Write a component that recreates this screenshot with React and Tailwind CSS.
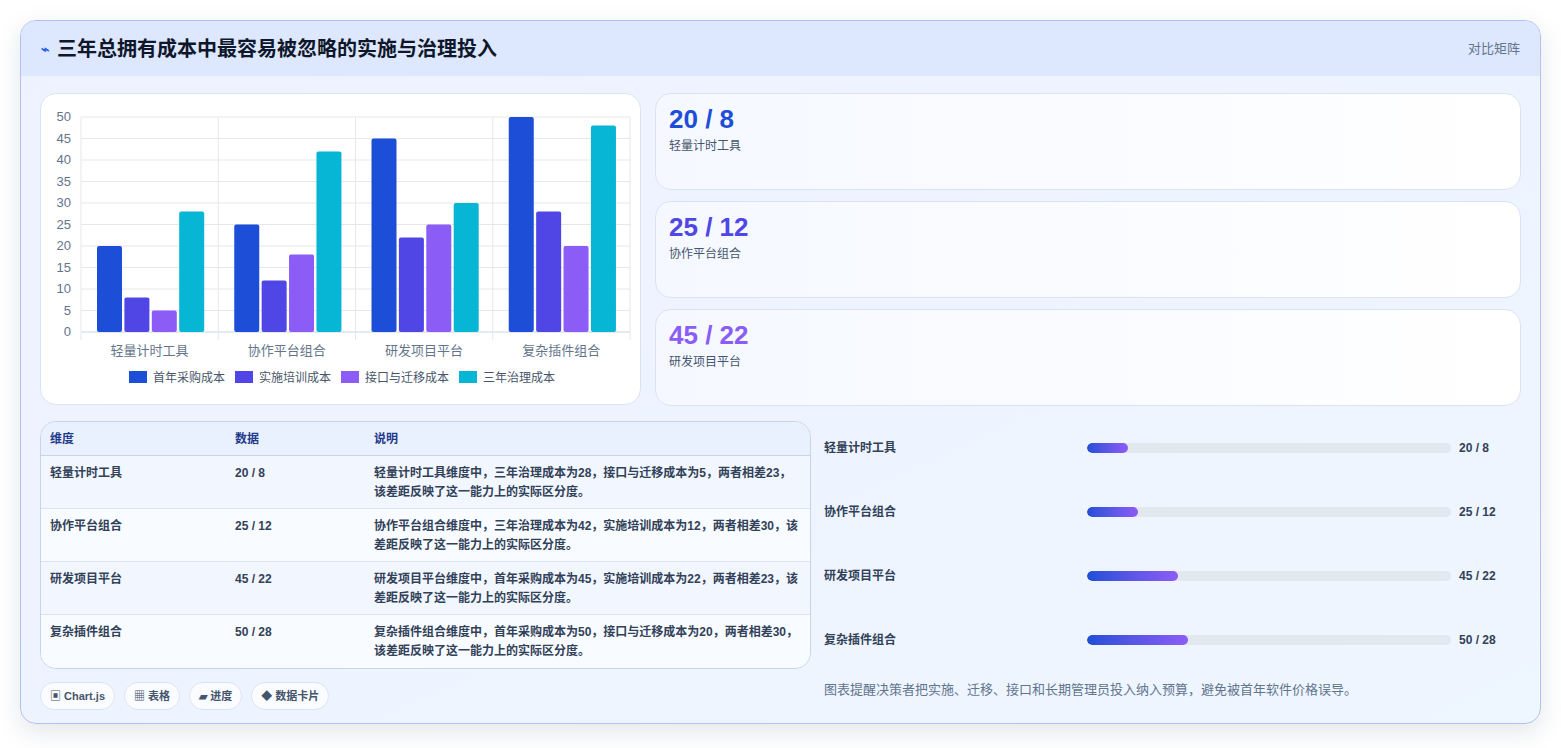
const cats = ["轻量计时工具", "协作平台组合", "研发项目平台", "复杂插件组合"]
const series = [
  { name: "首年采购成本", color: "#1d4ed8", data: [20, 25, 45, 50] },
  { name: "实施培训成本", color: "#4f46e5", data: [8, 12, 22, 28] },
  { name: "接口与迁移成本", color: "#8b5cf6", data: [5, 18, 25, 20] },
  { name: "三年治理成本", color: "#06b6d4", data: [28, 42, 30, 48] },
]
const stats = [
  { v: "20 / 8", l: "轻量计时工具", c: "text-[#1d4ed8]" },
  { v: "25 / 12", l: "协作平台组合", c: "text-[#4f46e5]" },
  { v: "45 / 22", l: "研发项目平台", c: "text-[#8b5cf6]" },
]
const rows = [
  ["轻量计时工具", "20 / 8", "轻量计时工具维度中，三年治理成本为28，接口与迁移成本为5，两者相差23，该差距反映了这一能力上的实际区分度。"],
  ["协作平台组合", "25 / 12", "协作平台组合维度中，三年治理成本为42，实施培训成本为12，两者相差30，该差距反映了这一能力上的实际区分度。"],
  ["研发项目平台", "45 / 22", "研发项目平台维度中，首年采购成本为45，实施培训成本为22，两者相差23，该差距反映了这一能力上的实际区分度。"],
  ["复杂插件组合", "50 / 28", "复杂插件组合维度中，首年采购成本为50，接口与迁移成本为20，两者相差30，该差距反映了这一能力上的实际区分度。"],
]
const prog = [
  ["轻量计时工具", "20 / 8", 11.3],
  ["协作平台组合", "25 / 12", 14],
  ["研发项目平台", "45 / 22", 25],
  ["复杂插件组合", "50 / 28", 27.8],
]

function Chart() {
  const L = 40, R = 589, T = 23, B = 238
  const y = (v) => B - (v / 50) * (B - T)
  const cw = (R - L) / 4
  const legendX = [88, 194, 300, 418]
  return (
    <svg width="601" height="312" style={{ fontFamily: "'Liberation Sans','Noto Sans CJK SC',sans-serif" }}>
      {[0, 5, 10, 15, 20, 25, 30, 35, 40, 45, 50].map((v) => (
        <g key={v}>
          <line x1={L} x2={R} y1={y(v)} y2={y(v)} stroke={v === 0 ? "#cbd5e1" : "#e5e7eb"} />
          <text x={30} y={y(v) + 4} textAnchor="end" fontSize="13" fill="#64748b">{v}</text>
        </g>
      ))}
      {[0, 1, 2, 3, 4].map((i) => (
        <line key={i} x1={L + cw * i} x2={L + cw * i} y1={T} y2={B + 8} stroke="#e5e7eb" />
      ))}
      {cats.map((c, i) => (
        <g key={c}>
          {series.map((s, j) => (
            <rect key={j} x={L + cw * i + 16 + j * 27.4} y={y(s.data[i])} width="25" height={B - y(s.data[i])} rx="2" fill={s.color} />
          ))}
          <text x={L + cw * i + cw / 2} y={261} textAnchor="middle" fontSize="13" fill="#64748b">{c}</text>
        </g>
      ))}
      {series.map((s, j) => (
        <g key={s.name}>
          <rect x={legendX[j]} y={277} width="18" height="12" fill={s.color} />
          <text x={legendX[j] + 24} y={288} fontSize="12" fill="#475569">{s.name}</text>
        </g>
      ))}
    </svg>
  )
}

export default function App() {
  return (
    <div className="min-h-screen bg-white p-5 text-slate-700" style={{ fontFamily: "'Liberation Sans','Noto Sans CJK SC',sans-serif" }}>
      <div className="rounded-2xl border border-[#b4c0f0] bg-gradient-to-br from-[#eef2ff] to-[#eef6ff] overflow-hidden shadow-[0_8px_24px_rgba(100,116,139,0.18)]">
        <div className="flex items-center justify-between h-[55px] px-5 bg-[#dde7fd]">
          <div className="flex items-center gap-2">
            <span className="text-[#2563eb] text-sm font-bold">⌁</span>
            <span className="text-[20px] font-bold text-[#0f172a]">三年总拥有成本中最容易被忽略的实施与治理投入</span>
          </div>
          <span className="text-[13px] text-slate-500">对比矩阵</span>
        </div>
        <div className="px-[19px] pt-[17px] pb-[13px]">
          <div className="flex gap-[14px]">
            <div className="w-[601px] h-[312px] bg-white rounded-2xl border border-[#dbe3f3]">
              <Chart />
            </div>
            <div className="flex-1 flex flex-col gap-[11px]">
              {stats.map((s) => (
                <div key={s.l} className="h-[97px] rounded-2xl border border-[#dbe3f3] bg-gradient-to-r from-[#f5f8ff] to-white px-[13px] pt-[10px]">
                  <div className={`text-[26px] font-bold leading-[30px] ${s.c}`}>{s.v}</div>
                  <div className="text-[12px] text-slate-600 mt-[3px]">{s.l}</div>
                </div>
              ))}
            </div>
          </div>
          <div className="flex gap-[13px] mt-[15px]">
            <div className="w-[771px]">
              <div className="rounded-2xl border border-[#c9d4ea] overflow-hidden text-[12px] font-bold">
                <div className="flex h-[34px] items-center bg-[#eaf1fe] text-[#1e3a8a] border-b border-[#c9d4ea]">
                  <div className="w-[194px] pl-[9px]">维度</div>
                  <div className="w-[139px]">数据</div>
                  <div className="flex-1">说明</div>
                </div>
                {rows.map((r, i) => (
                  <div key={r[0]} className={`flex h-[53px] pt-[8px] text-slate-700 ${i < 3 ? "border-b border-[#dbe3f3]" : ""} ${i % 2 ? "bg-[#f8fbff]" : "bg-[#f1f6ff]"}`}>
                    <div className="w-[194px] pl-[9px]">{r[0]}</div>
                    <div className="w-[139px]">{r[1]}</div>
                    <div className="flex-1 pr-[10px] leading-[19px]">{r[2]}</div>
                  </div>
                ))}
              </div>
              <div className="flex gap-[9px] mt-[13px]">
                {["▣ Chart.js", "▦ 表格", "▰ 进度", "◆ 数据卡片"].map((c) => (
                  <span key={c} className="h-[28px] px-[9px] flex items-center rounded-full border border-[#dbe3f3] bg-white/70 text-[11px] font-bold text-slate-600">{c}</span>
                ))}
              </div>
            </div>
            <div className="flex-1 flex flex-col -mt-[5px]">
              {prog.map((p) => (
                <div key={p[0]} className="h-[64px] flex items-center text-[12px] font-bold text-slate-700">
                  <div className="w-[263px]">{p[0]}</div>
                  <div className="w-[364px] h-[10px] rounded-full bg-[#e2e8f0] overflow-hidden">
                    <div className="h-full rounded-full bg-gradient-to-r from-[#1d4ed8] to-[#8b5cf6]" style={{ width: `${p[2]}%` }} />
                  </div>
                  <div className="ml-[8px]">{p[1]}</div>
                </div>
              ))}
              <div className="mt-[8px] text-[13px] text-slate-500">图表提醒决策者把实施、迁移、接口和长期管理员投入纳入预算，避免被首年软件价格误导。</div>
            </div>
          </div>
        </div>
      </div>
    </div>
  )
}
